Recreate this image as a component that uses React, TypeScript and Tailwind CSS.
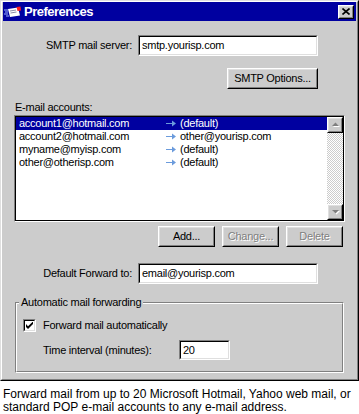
import React from 'react';

const raisedOuter = 'border border-t-white border-l-white border-r-black border-b-black';
const raisedInner = 'border border-t-[#dfdfdf] border-l-[#dfdfdf] border-r-[#808080] border-b-[#808080]';
const sunkenOuter = 'border border-t-[#808080] border-l-[#808080] border-r-white border-b-white';
const sunkenInner = 'border border-t-black border-l-black border-r-[#dfdfdf] border-b-[#dfdfdf]';

function WinButton({ label, width, disabled }: { label: string; width: string; disabled?: boolean }) {
  return (
    <div className={`${width} h-[21px] ${raisedOuter}`}>
      <div
        className={`h-full ${raisedInner} flex items-center justify-center ${
          disabled ? 'text-[#808080] [text-shadow:1px_1px_0_#ffffff]' : 'text-black'
        }`}
      >
        {label}
      </div>
    </div>
  );
}

function Field({ value, width, height }: { value: string; width: string; height: string }) {
  return (
    <div className={`${width} ${height} ${sunkenOuter}`}>
      <div className={`h-full bg-white ${sunkenInner} pl-[2px] flex items-center`}>{value}</div>
    </div>
  );
}

function Arrow() {
  return (
    <svg width="11" height="7" viewBox="0 0 11 7" className="shrink-0">
      <path d="M0 3.5H9" stroke="#6b9bdc" strokeWidth="1" />
      <path d="M6 0.5L10 3.5L6 6.5Z" fill="#6b9bdc" />
    </svg>
  );
}

function ScrollArrow({ up }: { up?: boolean }) {
  return (
    <div className={`w-[16px] h-[16px] bg-[#cccccc] ${raisedOuter}`}>
      <div className={`h-full ${raisedInner} flex items-center justify-center`}>
        <svg width="9" height="6" viewBox="0 0 9 6">
          {up ? (
            <>
              <path d="M2 5H9L5.5 1.5Z" fill="#ffffff" />
              <path d="M1 4H8L4.5 0.5Z" fill="#808080" />
            </>
          ) : (
            <>
              <path d="M2 2H9L5.5 5.5Z" fill="#ffffff" />
              <path d="M1 1H8L4.5 4.5Z" fill="#808080" />
            </>
          )}
        </svg>
      </div>
    </div>
  );
}

const accounts = [
  { name: 'account1@hotmail.com', target: '(default)', selected: true },
  { name: 'account2@hotmail.com', target: 'other@yourisp.com' },
  { name: 'myname@myisp.com', target: '(default)' },
  { name: 'other@otherisp.com', target: '(default)' },
];

export default function App() {
  return (
    <div className="w-[359px] h-[414px] bg-white font-['Liberation_Sans',Arial,sans-serif] text-[11px] leading-[13px] text-black overflow-hidden">
      {/* dialog window */}
      <div className="w-[359px] h-[381px] tracking-[-0.25px] border border-t-[#dfdfdf] border-l-[#dfdfdf] border-r-black border-b-black">
        <div className="h-full bg-[#cccccc] border border-t-white border-l-white border-r-[#808080] border-b-[#808080] px-px flex flex-col">
          {/* title bar */}
          <div className="h-[19px] bg-[#0000a0] flex items-center justify-between">
            <div className="flex items-center">
              <svg width="17" height="12" viewBox="0 0 17 12" className="ml-[1px]">
                <path d="M0 4H4M1 6H4M0 8H4M2 10H5" stroke="#9fb4ff" strokeWidth="1" />
                <path d="M4 3L14 1.5L16 9.5L6 11Z" fill="#ffffff" />
                <path d="M6 5L12 4M6.5 7L12.5 6" stroke="#6f6f8f" strokeWidth="0.8" />
                <path d="M12.5 1L16.5 0.5L17 4.5L13.5 5Z" fill="#ff2020" />
              </svg>
              <span className="ml-[3px] text-white font-bold text-[13px] tracking-[-0.5px] leading-[19px]">Preferences</span>
            </div>
            <div className={`mr-[2px] w-[16px] h-[14px] bg-[#cccccc] ${raisedOuter}`}>
              <div className={`h-full ${raisedInner} flex items-center justify-center`}>
                <svg width="8" height="7" viewBox="0 0 8 7">
                  <path d="M0.5 0.5L7.5 6.5M7.5 0.5L0.5 6.5" stroke="#000000" strokeWidth="1.6" />
                </svg>
              </div>
            </div>
          </div>

          {/* smtp server */}
          <div className="mt-[14px] flex items-center">
            <div className="w-[129px] text-right">SMTP mail server:</div>
            <div className="ml-[6px]">
              <Field value="smtp.yourisp.com" width="w-[180px]" height="h-[21px]" />
            </div>
          </div>

          <div className="mt-[12px] ml-[224px]">
            <WinButton label="SMTP Options..." width="w-[91px]" />
          </div>

          <div className="mt-[12px] ml-[12px] h-[13px]">E-mail accounts:</div>

          {/* accounts list */}
          <div className={`mt-[1px] ml-[11px] w-[331px] h-[107px] ${sunkenOuter}`}>
            <div className="h-full bg-white border border-black flex">
              <div className="flex-1 flex flex-col">
                {accounts.map((a) => (
                  <div
                    key={a.name}
                    className={`h-[13px] flex items-center ${a.selected ? 'bg-[#0000a0] text-white' : ''}`}
                  >
                    <div className="w-[150px] pl-[3px]">{a.name}</div>
                    <Arrow />
                    <div className="ml-[3px]">{a.target}</div>
                  </div>
                ))}
              </div>
              <div className="w-[16px] flex flex-col">
                <ScrollArrow up />
                <div className="flex-1 bg-[image:repeating-conic-gradient(#ffffff_0_25%,#cccccc_0_50%)] bg-[length:2px_2px]" />
                <ScrollArrow />
              </div>
            </div>
          </div>

          <div className="mt-[4px] ml-[155px] flex gap-[7px]">
            <WinButton label="Add..." width="w-[57px]" />
            <WinButton label="Change..." width="w-[57px]" disabled />
            <WinButton label="Delete" width="w-[57px]" disabled />
          </div>

          {/* default forward */}
          <div className="mt-[16px] flex items-center">
            <div className="w-[129px] text-right">Default Forward to:</div>
            <div className="ml-[6px]">
              <Field value="email@yourisp.com" width="w-[180px]" height="h-[21px]" />
            </div>
          </div>

          {/* group box */}
          <div className="mt-[18px] ml-[12px] w-[329px] h-[71px] relative border border-t-[#808080] border-l-[#808080] border-r-white border-b-white">
            <div className="h-full border border-t-white border-l-white border-r-[#808080] border-b-[#808080] flex flex-col">
              <div className="mt-[15px] pl-[6px] flex items-center">
                <div className={`w-[13px] h-[13px] ${sunkenOuter}`}>
                  <div className={`h-full bg-white ${sunkenInner} flex items-center justify-center`}>
                    <svg width="7" height="7" viewBox="0 0 7 7">
                      <path d="M0 2V5L2 7L7 2V-0.5L2 4.2Z" fill="#000000" />
                    </svg>
                  </div>
                </div>
                <span className="ml-[7px]">Forward mail automatically</span>
              </div>
              <div className="mt-[8px] pl-[26px] flex items-center">
                <div className="w-[136px]">Time interval (minutes):</div>
                <Field value="20" width="w-[51px]" height="h-[20px]" />
              </div>
            </div>
            <span className="absolute left-[3px] -top-[7px] px-[2px] bg-[#cccccc] leading-[13px]">
              Automatic mail forwarding
            </span>
          </div>
        </div>
      </div>

      <p className="mt-[7px] px-[3px] text-[12px] leading-[13px]">
        Forward mail from up to 20 Microsoft Hotmail, Yahoo web mail, or
        <br />
        standard POP e-mail accounts to any e-mail address.
      </p>
    </div>
  );
}
